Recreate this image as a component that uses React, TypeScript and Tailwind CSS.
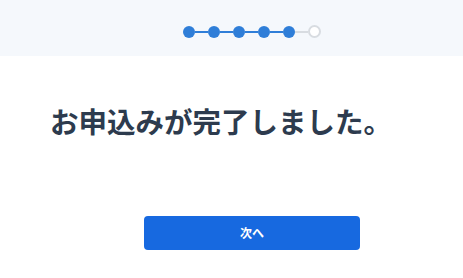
import React from "react";

const steps = [true, true, true, true, true, false];

function Stepper() {
  return (
    <div className="flex items-center">
      {steps.map((done, i) => (
        <React.Fragment key={i}>
          {i > 0 && (
            <div
              className={
                done ? "h-[2px] w-[13px] bg-[#2f7ed8]" : "h-[2px] w-[13px] bg-[#d8dce1]"
              }
            />
          )}
          {done ? (
            <div className="h-[12px] w-[12px] rounded-full bg-[#2f7ed8]" />
          ) : (
            <div className="h-[13px] w-[13px] rounded-full border-2 border-[#d8dce1] bg-white" />
          )}
        </React.Fragment>
      ))}
    </div>
  );
}

export default function App() {
  return (
    <div
      className="min-h-[278px] bg-white"
      style={{ fontFamily: '"Noto Sans CJK JP", "Noto Sans", sans-serif' }}
    >
      <header className="h-[56px] bg-[#f5f8fc] pl-[41px] pt-[25px]">
        <div className="flex justify-center">
          <Stepper />
        </div>
      </header>
      <main className="pl-[41px]">
        <h1 className="pl-[9px] pt-[46px] text-[28.5px] font-bold leading-[38px] text-[#2d3b4e]">
          お申込みが完了しました。
        </h1>
        <div className="flex justify-center pt-[76px]">
          <button className="h-[34px] w-[216px] rounded-[4px] bg-[#1769e0] text-[12px] font-bold text-white">
            次へ
          </button>
        </div>
      </main>
    </div>
  );
}
